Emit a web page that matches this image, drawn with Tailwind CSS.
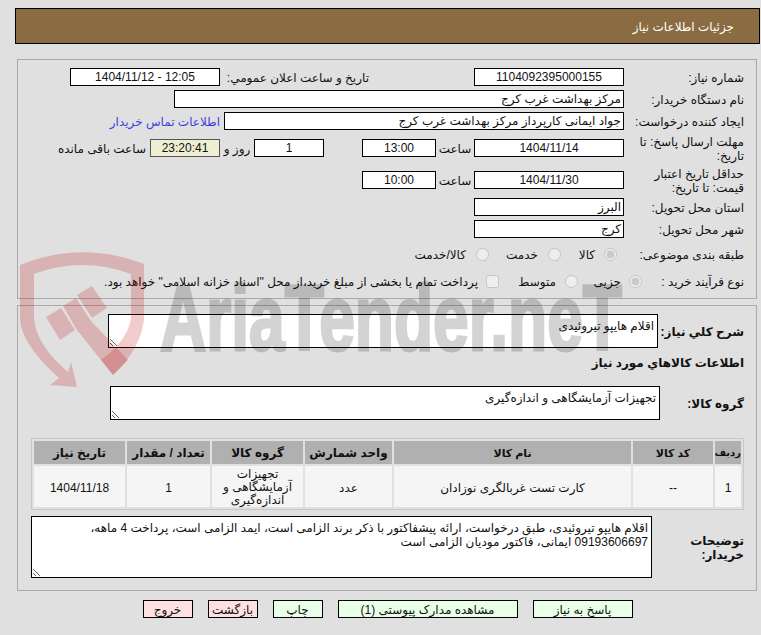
<!DOCTYPE html>
<html lang="fa" dir="rtl">
<head>
    <meta charset="UTF-8">
    <title>جزئیات اطلاعات نیاز</title>
    <script src="https://cdn.jsdelivr.net/npm/@tailwindcss/browser@4"></script>
</head>
<body class="bg-[#e0e0e0] min-h-[635px] overflow-hidden relative font-['Liberation_Sans','DejaVu_Sans',sans-serif] text-[12px] leading-[14px] text-[#111]">
    <div class="ml-[15px] mr-px pt-2">
        <div class="h-9 bg-[#8b6b41] border border-black flex items-center pr-[25px] pt-px text-white">جزئیات اطلاعات نیاز</div>

        <!-- اطلاعات اصلی -->
        <div class="mt-[15px] ml-[2px] mr-[3px] h-[240px] border border-[#a9a9a9] pt-2 pr-3 flex flex-col gap-1">
            <div class="flex items-center h-[18px]">
                <div class="w-[120px] pt-[2px]">شماره نیاز:</div>
                <div class="w-[150px] h-[18px] leading-4 bg-white border border-black text-center">1104092395000155</div>
                <div class="mr-[105px] w-[139px] pt-[2px] whitespace-nowrap">تاریخ و ساعت اعلان عمومي:</div>
                <div dir="ltr" class="mr-[10px] w-[150px] h-[18px] leading-4 bg-white border border-black text-center">1404/11/12 - 12:05</div>
            </div>
            <div class="flex items-center h-[18px]">
                <div class="w-[120px] pt-[2px]">نام دستگاه خریدار:</div>
                <div class="w-[450px] h-[18px] leading-4 bg-white border border-black pr-[2px]">مرکز بهداشت غرب کرج</div>
            </div>
            <div class="flex items-center h-[18px]">
                <div class="w-[120px] pt-[2px]">ایجاد کننده درخواست:</div>
                <div class="w-[400px] h-[18px] leading-4 bg-white border border-black pr-[2px]">جواد ایمانی کارپرداز مرکز بهداشت غرب کرج</div>
                <a class="mr-1 pt-[2px] text-[#3f3fe0]">اطلاعات تماس خریدار</a>
            </div>
            <div class="flex items-center h-7">
                <div class="w-[120px] pt-[2px]">مهلت ارسال پاسخ: تا تاریخ:</div>
                <div class="w-[150px] h-[18px] leading-4 bg-white border border-black text-center">1404/11/14</div>
                <div class="w-[38px] pt-[2px] text-center">ساعت</div>
                <div class="w-[74px] h-[18px] leading-4 bg-white border border-black text-center">13:00</div>
                <div class="w-[38px]"></div>
                <div class="w-[70px] h-[18px] leading-4 bg-white border border-black text-center">1</div>
                <div class="w-[34px] pt-[2px] text-center">روز و</div>
                <div class="w-[70px] h-[18px] leading-4 bg-[#eeeed2] border border-[#555] text-center">23:20:41</div>
                <div class="mr-1 pt-[2px]">ساعت باقی مانده</div>
            </div>
            <div class="flex items-center h-7">
                <div class="w-[120px] pt-[2px]">حداقل تاریخ اعتبار قیمت: تا تاریخ:</div>
                <div class="w-[150px] h-[18px] leading-4 bg-white border border-black text-center">1404/11/30</div>
                <div class="w-[38px] pt-[2px] text-center">ساعت</div>
                <div class="w-[74px] h-[18px] leading-4 bg-white border border-black text-center">10:00</div>
            </div>
            <div class="flex items-center h-[18px]">
                <div class="w-[120px] pt-[2px]">استان محل تحویل:</div>
                <div class="w-[150px] h-[18px] leading-4 bg-white border border-black pr-[2px]">البرز</div>
            </div>
            <div class="flex items-center h-[18px]">
                <div class="w-[120px] pt-[2px]">شهر محل تحویل:</div>
                <div class="w-[150px] h-[18px] leading-4 bg-white border border-black pr-[2px]">کرج</div>
            </div>
            <div class="flex items-center h-6">
                <div class="w-[127px] pt-[2px]">طبقه بندی موضوعی:</div>
                <input type="radio" disabled checked class="m-0 w-[13px] h-[13px]">
                <span class="mr-[9px] w-[34px] pt-[2px]">کالا</span>
                <input type="radio" disabled class="m-0 w-[13px] h-[13px]">
                <span class="mr-[10px] w-[49px] pt-[2px]">خدمت</span>
                <input type="radio" disabled class="m-0 w-[13px] h-[13px]">
                <span class="mr-[10px] pt-[2px]">کالا/خدمت</span>
            </div>
            <div class="flex items-center h-[22px]">
                <div class="w-[102px] pt-[2px]">نوع فرآیند خرید :</div>
                <input type="radio" disabled checked class="m-0 w-[13px] h-[13px]">
                <span class="mr-[8px] w-[43px] pt-[2px]">جزیی</span>
                <input type="radio" disabled class="m-0 w-[13px] h-[13px]">
                <span class="mr-[9px] w-[57px] pt-[2px]">متوسط</span>
                <input type="checkbox" disabled class="m-0 w-[13px] h-[13px]">
                <span class="mr-[8px] pt-[2px]">پرداخت تمام یا بخشی از مبلغ خرید،از محل "اسناد خزانه اسلامی" خواهد بود.</span>
            </div>
        </div>

        <!-- کالاها -->
        <div class="mt-[6px] ml-[2px] mr-[3px] h-[286px] border border-[#a9a9a9] pt-2 pr-3">
            <div class="flex items-center">
                <div class="w-[86px] pt-[2px] font-bold">شرح کلي نياز:</div>
                <textarea readonly class="w-[550px] h-[34px] bg-white border border-black pl-[2px] pr-[3px] pt-1 text-[12px] leading-[14px]">اقلام هایپو تیروئیدی</textarea>
            </div>
            <div class="mt-[8px] h-[14px] font-bold">اطلاعات کالاهاي مورد نياز</div>
            <div class="mt-[16px] flex items-center">
                <div class="w-[84px] pt-[2px] font-bold">گروه کالا:</div>
                <textarea readonly class="w-[550px] h-[34px] bg-white border border-black pl-[2px] pr-[3px] pt-1 text-[12px] leading-[14px]">تجهیزات آزمایشگاهی و اندازه‌گیری</textarea>
            </div>
            <table class="mt-[18px] w-[713px] table-fixed border-separate border-spacing-[2px] border border-[#c8c8c8] text-center">
                <thead>
                    <tr class="h-[23px] bg-[#b0b0b0] font-bold">
                        <th class="w-[26px] p-0 text-[10px]">ردیف</th>
                        <th class="w-[80px] p-0 text-[11px]">کد کالا</th>
                        <th class="w-[237px] p-0 text-[11px]">نام کالا</th>
                        <th class="w-[87px] p-0">واحد شمارش</th>
                        <th class="w-[91px] p-0">گروه کالا</th>
                        <th class="w-[83px] p-0">تعداد / مقدار</th>
                        <th class="w-[91px] p-0">تاریخ نیاز</th>
                    </tr>
                </thead>
                <tbody>
                    <tr class="h-[41px] bg-[#f5f5f5]">
                        <td class="p-0 pt-[2px]">1</td>
                        <td class="p-0 pt-[2px]">--</td>
                        <td class="p-0 pt-[2px]">کارت تست غربالگری نوزادان</td>
                        <td class="p-0 pt-[2px]">عدد</td>
                        <td class="p-0 pt-[2px] leading-[13px]">تجهیزات آزمایشگاهی و اندازه‌گیری</td>
                        <td class="p-0 pt-[2px]">1</td>
                        <td class="p-0 pt-[2px]">1404/11/18</td>
                    </tr>
                </tbody>
            </table>
            <div class="mt-[6px] flex items-center">
                <div class="w-[92px] pt-[2px] font-bold">توضیحات خریدار:</div>
                <textarea readonly class="w-[621px] h-[62px] bg-white border border-black pl-[2px] pr-[3px] pt-1 text-[12px] leading-[14px]">اقلام هایپو تیروئیدی، طبق درخواست، ارائه پیشفاکتور با ذکر برند الزامی است، ایمد الزامی است، پرداخت 4 ماهه، 09193606697 ایمانی، فاکتور مودیان الزامی است</textarea>
            </div>
        </div>

        <div class="mt-[9px] flex justify-center gap-[15px] text-center">
            <button class="w-[100px] h-[18px] pt-px bg-[#e8ffe8] border border-black">پاسخ به نیاز</button>
            <button class="w-[180px] h-[18px] pt-px bg-[#e8ffe8] border border-black">مشاهده مدارک پیوستی (1)</button>
            <button class="w-[50px] h-[18px] pt-px bg-[#e8ffe8] border border-black">چاپ</button>
            <button class="w-[50px] h-[18px] pt-px bg-[#ffe0e0] border border-black">بازگشت</button>
            <button class="w-[50px] h-[18px] pt-px bg-[#ffe0e0] border border-black">خروج</button>
        </div>
    </div>

    <!-- واترمارک -->
    <svg class="absolute left-0 top-0 pointer-events-none" width="761" height="635">
        <g fill="#c00000" fill-opacity="0.2">
            <path d="M20 265 Q82 240 144 264 V320 Q140 350 113 375 L101 360 Q128 340 131 318 V274 Q82 256 34 274 V318 Q36 345 68 372 L71 362 L77 387 L50 385 L59 378 Q22 345 20 320 Z"/>
            <path d="M46 317 L61 308 L75 330 L60 340 Z"/>
            <path d="M77 295 L92 286 L107 308 L92 318 Z"/>
            <path d="M63 306 L76 298 L91 321 L128 360 L113 375 L77 330 Z"/>
        </g>
        <text x="160" y="350" direction="ltr" text-anchor="start" textLength="462" lengthAdjust="spacingAndGlyphs" font-family="Liberation Sans" font-weight="700" font-size="92" fill="#000" stroke="#000" stroke-width="3" opacity="0.17">AriaTender.neT</text>
    </svg>
</body>
</html>
